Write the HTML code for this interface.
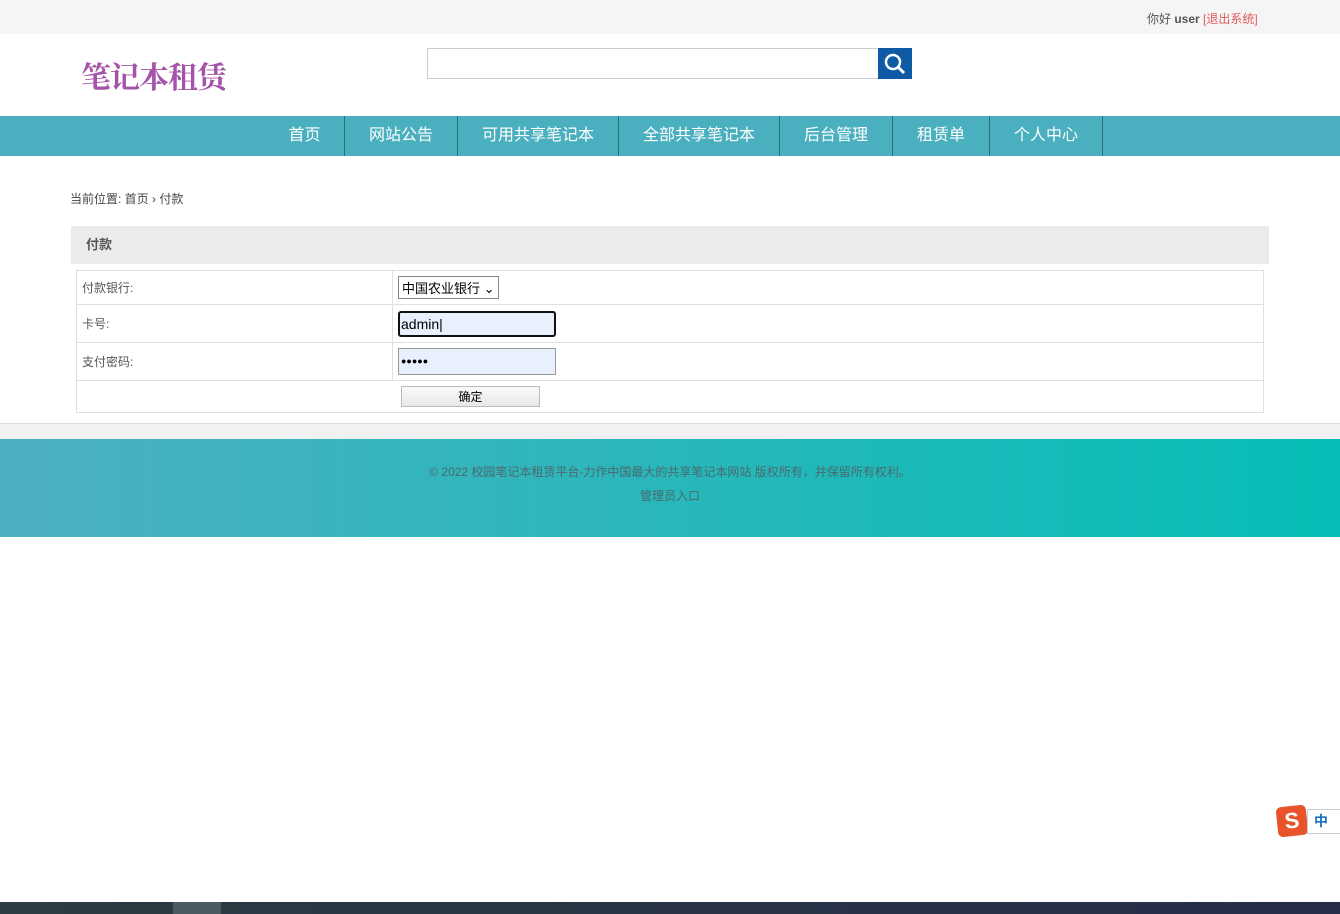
<!DOCTYPE html>
<html><head><meta charset="utf-8"><style>
*{margin:0;padding:0;box-sizing:border-box}
body{width:1340px;height:914px;position:relative;background:#fff;font-family:"Liberation Sans","Noto Sans CJK SC",sans-serif;color:#333;overflow:hidden}
.abs{position:absolute}
.top{left:0;top:0;width:1340px;height:34px;background:#f5f5f5;font-size:12px;color:#555}
.nav{left:0;top:116px;width:1340px;height:40px;background:#4aafbf}
.nav div{position:absolute;top:0;height:40px;line-height:40px;color:#fff;font-size:16px;text-align:center;border-right:1px solid #2f6f78}
td{border:1px solid #e0e0e0;font-size:12px;color:#555;padding-left:5px}
</style></head><body>
<div class="abs top"><span class="abs" style="left:1147px;top:10px">你好 <b>user</b> <span style="color:#e05a5a">[退出系统]</span></span></div>
<div class="abs" style="left:81px;top:53px;font-size:30px;color:#a454a8;font-family:'Noto Serif CJK SC',serif;font-weight:bold;letter-spacing:-1px">笔记本租赁</div>
<div class="abs" style="left:427px;top:48px;width:452px;height:31px;border:1px solid #ccc"></div>
<div class="abs" style="left:878px;top:48px;width:34px;height:31px;background:#0f5aa5">
<svg width="34" height="31"><circle cx="15" cy="14" r="7" fill="none" stroke="#fff" stroke-width="2.5"/><path d="M20 19l6 6" stroke="#fff" stroke-width="3"/></svg></div>
<div class="abs nav">
<div style="left:265px;width:80px">首页</div>
<div style="left:345px;width:113px">网站公告</div>
<div style="left:458px;width:161px">可用共享笔记本</div>
<div style="left:619px;width:161px">全部共享笔记本</div>
<div style="left:780px;width:113px">后台管理</div>
<div style="left:893px;width:97px">租赁单</div>
<div style="left:990px;width:113px">个人中心</div>
</div>
<div class="abs" style="left:70px;top:190px;font-size:12px;color:#444">当前位置: 首页 › 付款</div>
<div class="abs" style="left:71px;top:226px;width:1198px;height:38px;background:#ebebeb;font-size:13px;font-weight:bold;color:#555;line-height:38px;padding-left:15px">付款</div>
<table class="abs" style="left:76px;top:270px;width:1188px;border-collapse:collapse">
<tr style="height:34px"><td style="width:316px">付款银行:</td><td><span style="display:inline-block;border:1px solid #888;font-size:13px;color:#000;padding:1px 3px;height:23px">中国农业银行 ⌄</span></td></tr>
<tr style="height:38px"><td>卡号:</td><td><div style="width:158px;height:26px;border:2px solid #111;border-radius:3px;background:#e8f0fe;font-size:14px;color:#000;line-height:22px;padding-left:1px">admin|</div></td></tr>
<tr style="height:38px"><td>支付密码:</td><td><div style="width:158px;height:27px;border:1px solid #999;background:#e8f0fe;font-size:9px;color:#000;line-height:25px;padding-left:2px">●●●●●</div></td></tr>
<tr style="height:32px"><td colspan="2" style="padding-left:324px"><div style="width:139px;height:21px;border:1px solid #bbb;background:linear-gradient(#fafafa,#e8e8e8);font-size:12px;color:#000;text-align:center;line-height:20px">确定</div></td></tr>
</table>
<div class="abs" style="left:0;top:423px;width:1340px;height:16px;background:#f1f1f1;border-top:1px solid #ddd"></div>
<div class="abs" style="left:0;top:439px;width:1340px;height:98px;background:linear-gradient(90deg,#4cb0c0,#05beb5);text-align:center;font-size:12px;color:#4a6a6e">
<div style="margin-top:24px">© 2022 校园笔记本租赁平台-力作中国最大的共享笔记本网站 版权所有，并保留所有权利。</div>
<div style="margin-top:7px">管理员入口</div></div>
<div class="abs" style="left:1277px;top:806px;width:30px;height:30px;background:#e8532a;border-radius:5px;transform:rotate(-6deg);color:#fff;font-weight:bold;font-size:22px;text-align:center;line-height:30px">S</div>
<div class="abs" style="left:1307px;top:809px;width:33px;height:25px;border:1px solid #c5ced8;border-right:none;background:#fff;color:#1a6fc2;font-weight:bold;font-size:14px;line-height:23px;padding-left:6px">中</div>
<div class="abs" style="left:0;top:902px;width:1340px;height:12px;background:linear-gradient(90deg,#2b3c42,#252d48)"></div>
<div class="abs" style="left:173px;top:902px;width:48px;height:12px;background:#4b5b62"></div>
</body></html>
